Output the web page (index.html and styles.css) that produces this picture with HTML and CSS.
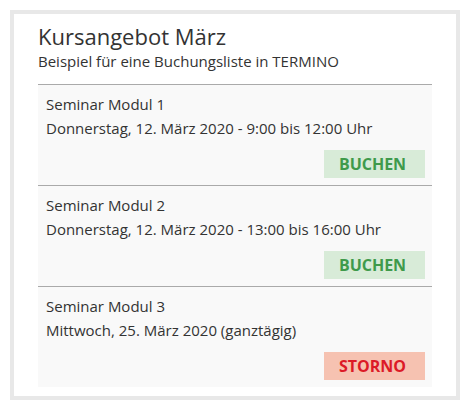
FILE: index.html
```html
<!DOCTYPE html>
<html lang="de">
<head>
<meta charset="utf-8">
<title>Kursangebot März</title>
<link rel="stylesheet" href="styles.css">
</head>
<body>
<div class="card">
  <h1 class="title">Kursangebot März</h1>
  <p class="subtitle">Beispiel für eine Buchungsliste in TERMINO</p>
  <ul class="list">
    <li class="item">
      <div class="name">Seminar Modul 1</div>
      <div class="date">Donnerstag, 12. März 2020 - 9:00 bis 12:00 Uhr</div>
      <div class="actions"><span class="btn btn-book">BUCHEN</span></div>
    </li>
    <li class="item">
      <div class="name">Seminar Modul 2</div>
      <div class="date">Donnerstag, 12. März 2020 - 13:00 bis 16:00 Uhr</div>
      <div class="actions"><span class="btn btn-book">BUCHEN</span></div>
    </li>
    <li class="item">
      <div class="name">Seminar Modul 3</div>
      <div class="date">Mittwoch, 25. März 2020 (ganztägig)</div>
      <div class="actions"><span class="btn btn-cancel">STORNO</span></div>
    </li>
  </ul>
</div>
</body>
</html>
```
FILE: styles.css
```css
html, body {
  margin: 0;
  padding: 0;
  background: #ffffff;
}
body {
  font-family: "Open Sans", "Liberation Sans", sans-serif;
  color: #333333;
}
.card {
  box-sizing: border-box;
  width: 450px;
  margin: 10px;
  border: 4px solid #e8e8e8;
  padding: 8px 24px 9px 24px;
  background: #ffffff;
}
.title {
  margin: 0;
  font-size: 22px;
  line-height: 29px;
  font-weight: 400;
  color: #333333;
}
.subtitle {
  margin: 0;
  font-size: 15px;
  line-height: 20px;
  color: #333333;
}
.list {
  list-style: none;
  margin: 13px 0 0 0;
  padding: 0;
}
.item {
  display: flex;
  flex-direction: column;
  border-top: 1px solid #aaaaaa;
  background: #f9f9f9;
  padding: 7px 7px 7px 8px;
  font-size: 15px;
  line-height: 24px;
}
.actions {
  display: flex;
  justify-content: flex-end;
  margin-top: 10px;
}
.btn {
  display: inline-block;
  box-sizing: border-box;
  width: 101px;
  height: 28px;
  line-height: 28px;
  text-align: center;
  font-weight: 700;
  font-size: 16px;
  padding-right: 4px;
}
.btn-book {
  background: #d8ebd8;
  color: #3f9a4b;
}
.btn-cancel {
  background: #f6c2b1;
  color: #dc1a27;
}
```
